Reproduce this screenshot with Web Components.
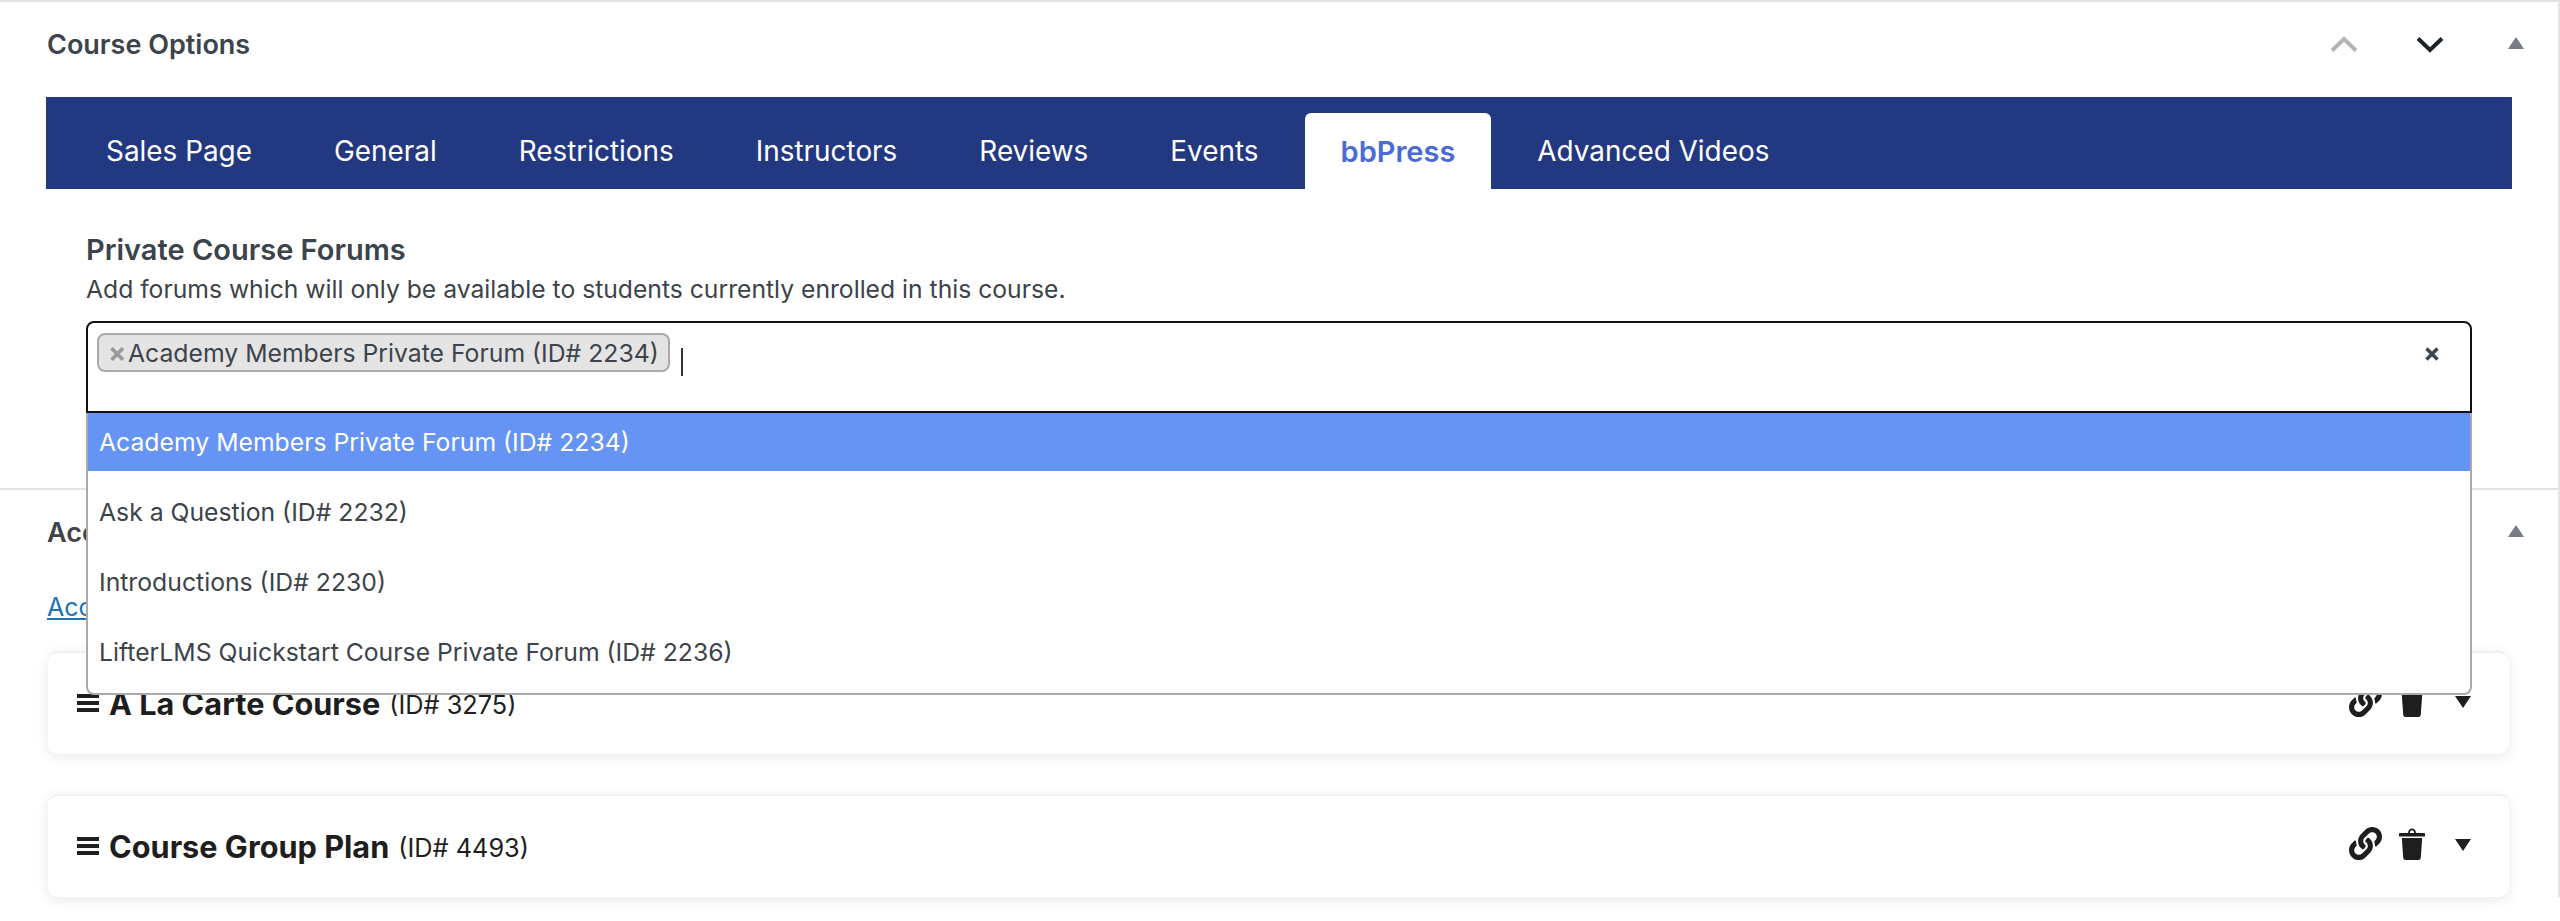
<!DOCTYPE html>
<html><head><meta charset="utf-8">
<style>
html,body{margin:0;padding:0;background:#fff;height:921px;overflow:hidden}
body{font-family:Inter,"Liberation Sans",sans-serif;color:#3c434a}
</style></head><body>
<meta-box heading="Course Options" first>
  <course-tabs></course-tabs>
  <forum-field></forum-field>
</meta-box>
<meta-box heading="Acc">
  <a-link>Acc</a-link>
  <plan-card name="A La Carte Course" pid="(ID# 3275)"></plan-card>
  <plan-card name="Course Group Plan" pid="(ID# 4493)"></plan-card>
</meta-box>
<script>
const def=(n,html,extra)=>customElements.define(n,class extends HTMLElement{
  connectedCallback(){ if(this.shadowRoot)return; const r=this.attachShadow({mode:'open'}); r.innerHTML=typeof html==='function'?html(this):html; if(extra)extra(this,r);}
});
const tri=(up,c)=>`<svg width="16" height="12" viewBox="0 0 16 12" style="display:block"><path d="${up?'M8 0L16 12H0Z':'M0 0H16L8 12Z'}" fill="${c}"/></svg>`;
const chev=(up,c)=>`<svg width="28" height="17" viewBox="0 0 28 17" style="display:block"><path d="${up?'M2 14.5L14 3L26 14.5':'M2 2.5L14 14L26 2.5'}" fill="none" stroke="${c}" stroke-width="4"/></svg>`;

def('meta-box',h=>`<style>
:host{display:block;position:relative;border-right:2px solid #e4e4e4;border-top:2px solid #e2e2e2;background:#fff}
header{height:84px;display:flex;align-items:center;padding:0 34px 0 47px;font-weight:600;font-size:27px;color:#3c434a}
.t{flex:1}
.hc{display:flex;align-items:center;}
.body{padding:11px 46px 0 46px}
:host([first]) .body{padding-bottom:75px}
</style>
<header><span class="t">${h.getAttribute('heading')}</span><span class="hc">
${h.hasAttribute('first')?`<span>${chev(true,'#b4b5b7')}</span><span style="margin:0 64px 0 58px">${chev(false,'#1d2327')}</span>`:''}
<span style="margin:-2px 0 0 0">${tri(true,'#787c82')}</span></span></header>
<div class="body"><slot></slot></div>`);

const tabs=['Sales Page','General','Restrictions','Instructors','Reviews','Events','bbPress','Advanced Videos'];
def('course-tabs',`<style>
:host{display:flex;height:92px;background:#223982;align-items:flex-end;padding-left:24px;gap:10px}
span{display:flex;align-items:center;height:76px;padding:0 36px;color:#fff;font-size:27.9px;font-weight:400;box-sizing:border-box}
.a{background:#fff;color:#4a6ad4;font-weight:600;font-size:29px;border-radius:6px 6px 0 0}
</style>`+tabs.map(t=>`<span class="${t=='bbPress'?'a':''}">${t}</span>`).join(''));

def('forum-field',`<style>
:host{display:block;position:relative;padding:0 40px 0 40px;}
h3{margin:0;font-size:29px;line-height:34px;font-weight:600;color:#3c434a;padding-top:44px}
p{margin:0;font-size:24.7px;line-height:32px;color:#3c434a;padding-top:6px}
.box{margin-top:16px;height:92px;box-sizing:border-box;border:2px solid #111;border-radius:8px 8px 0 0;background:#fff;display:flex;align-items:flex-start;padding:10px 0 0 9px;position:relative}
.tag{display:flex;align-items:center;height:39px;box-sizing:border-box;background:#e4e4e4;border:2px solid #aaa;border-radius:8px;font-size:24.75px;padding:0 9px 0 9px;color:#3c434a;white-space:nowrap}
.tag b{color:#999;font-size:27px;font-weight:700;width:20px;flex:none;line-height:1}
.cur{width:2px;height:28px;background:#333;margin:15px 0 0 11px}
.x{position:absolute;right:31px;top:24px}
ul{position:absolute;left:40px;right:40px;top:100%;z-index:5;margin:0;padding:0;list-style:none;background:#fff;border:2px solid #aaa;border-top:0;border-radius:0 0 8px 8px;box-sizing:border-box}
li{height:58px;margin-bottom:12px;display:flex;align-items:center;padding-left:11px;font-size:24.75px;color:#3c434a}
li.on{background:#6694f4;color:#fff}
</style>
<h3>Private Course Forums</h3>
<p>Add forums which will only be available to students currently enrolled in this course.</p>
<div class="box"><span class="tag"><b>×</b>Academy Members Private Forum (ID# 2234)</span><span class="cur"></span>
<svg class="x" width="14" height="14" viewBox="0 0 14 14"><path d="M1.5 1.5L12.5 12.5M12.5 1.5L1.5 12.5" stroke="#3c434a" stroke-width="3.4" fill="none"/></svg></div>
<ul><li class="on">Academy Members Private Forum (ID# 2234)</li><li>Ask a Question (ID# 2232)</li><li>Introductions (ID# 2230)</li><li>LifterLMS Quickstart Course Private Forum (ID# 2236)</li></ul>`);

def('a-link',`<style>:host{display:block;white-space:nowrap;color:#2271b1;font-size:25px;line-height:36px;text-decoration:underline;margin:4px 0 0 1px}</style><slot></slot>`);

const LINK="M326.612 185.391c59.747 59.809 58.927 155.698.36 214.59-.11.12-.24.25-.36.37l-67.2 67.2c-59.27 59.27-155.699 59.262-214.96 0-59.27-59.26-59.27-155.7 0-214.96l37.106-37.106c9.84-9.84 26.786-3.3 27.294 10.606.648 17.722 3.826 35.527 9.69 52.721 1.986 5.822.567 12.262-3.783 16.612l-13.087 13.087c-28.026 28.026-28.905 73.66-1.155 101.96 28.024 28.579 74.086 28.749 102.325.51l67.2-67.19c28.191-28.191 28.073-73.757 0-101.83-3.701-3.694-7.429-6.564-10.341-8.569a16.037 16.037 0 0 1-6.947-12.606c-.396-10.567 3.348-21.456 11.698-29.806l21.054-21.055c5.521-5.521 14.182-6.199 20.584-1.731a152.482 152.482 0 0 1 20.522 17.197zM467.547 44.449c-59.261-59.262-155.69-59.27-214.96 0l-67.2 67.2c-.12.12-.25.25-.36.37-58.566 58.892-59.387 154.781.36 214.59a152.454 152.454 0 0 0 20.521 17.196c6.402 4.468 15.064 3.789 20.584-1.731l21.054-21.055c8.35-8.35 12.094-19.239 11.698-29.806a16.037 16.037 0 0 0-6.947-12.606c-2.912-2.005-6.64-4.875-10.341-8.569-28.073-28.073-28.191-73.639 0-101.83l67.2-67.19c28.239-28.239 74.3-28.069 102.325.51 27.75 28.3 26.872 73.934-1.155 101.96l-13.087 13.087c-4.35 4.35-5.769 10.79-3.783 16.612 5.864 17.194 9.042 34.999 9.69 52.721.509 13.906 17.454 20.446 27.294 10.606l37.106-37.106c59.271-59.259 59.271-155.699.001-214.959z";
def('plan-card',h=>`<style>
:host{display:block;height:103px;box-sizing:border-box;margin:26px 3px 40px 2px;background:#fff;border-radius:10px;border-top:2px solid #f0f0f0;box-shadow:0 3px 14px rgba(0,0,0,.09);padding-left:29px;position:relative}
.row{display:flex;align-items:center;height:100px}
.b{width:22px;height:18px;margin-right:10px;flex:none;display:flex;flex-direction:column;justify-content:space-between}
.b i{display:block;height:4px;background:#1e1e1e}
strong{font-size:30.7px;font-weight:700;color:#1e1e1e}
em{font-style:normal;font-size:25.3px;color:#1e1e1e;margin-left:9px;font-weight:400;padding-top:3px}
.ic{margin:-5px 0 0 auto;display:flex;align-items:center;padding-right:38px}
</style><div class="row"><span class="b"><i></i><i></i><i></i></span><strong>${h.getAttribute('name')}</strong><em>${h.getAttribute('pid')}</em>
<span class="ic"><svg width="33" height="33" viewBox="0 0 512 512" style="display:block"><path fill="#1e1e1e" d="${LINK}"/></svg>
<svg width="26" height="32" viewBox="0 0 26 32" style="display:block;margin-left:17px"><path fill="#1e1e1e" d="M9 5C9 2 11 .5 13 .5S17 2 17 5H15.2C15 3.2 14.2 2.3 13 2.3S11 3.2 10.8 5ZM1 5H25C25.6 5 26 5.4 26 6V8.5H0V6C0 5.4.4 5 1 5ZM2.8 10H23.2L21.8 29.6C21.7 31 20.8 32 19.5 32H6.5C5.2 32 4.3 31 4.2 29.6Z"/></svg>
<span style="margin-left:30px;display:block;padding-top:3px">${tri(false,'#1e1e1e')}</span></span></div>`);
</script>
</body></html>
